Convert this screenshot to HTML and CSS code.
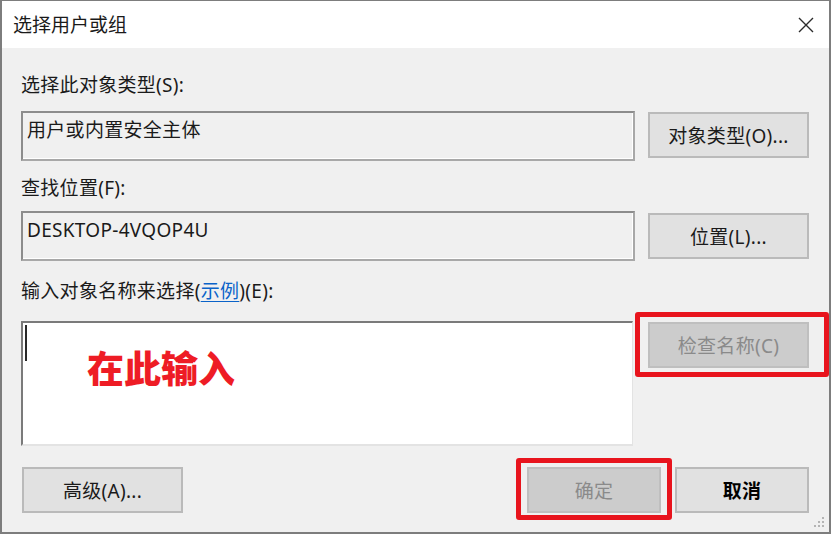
FILE: index.html
```html
<!DOCTYPE html>
<html lang="zh-CN">
<head>
<meta charset="utf-8">
<title>选择用户或组</title>
<link rel="stylesheet" href="styles.css">
</head>
<body>
<div class="window">
  <div class="titlebar">
    <span class="title">选择用户或组</span>
    <svg class="close" width="16" height="16" viewBox="0 0 16 16"><path d="M1 1 L15 15 M15 1 L1 15" stroke="#2b2b2b" stroke-width="1.4" fill="none"/></svg>
  </div>
  <div class="content">
    <div class="label">选择此对象类型(S):</div>
    <div class="row row1">
      <div class="field">用户或内置安全主体</div>
      <div class="btn side">对象类型(O)...</div>
    </div>
    <div class="label label2">查找位置(F):</div>
    <div class="row row2">
      <div class="field">DESKTOP-4VQOP4U</div>
      <div class="btn side">位置(L)...</div>
    </div>
    <div class="label label3">输入对象名称来选择(<span class="link">示例</span>)(E):</div>
    <div class="row row3">
      <div class="area">
        <span class="caret"></span>
        <span class="hint">在此输入</span>
      </div>
      <div class="btn side disabled marked mark1">检查名称(C)</div>
    </div>
    <div class="bottom">
      <div class="btn adv">高级(A)...</div>
      <div class="spacer"></div>
      <div class="btn ok disabled marked mark2">确定</div>
      <div class="btn cancel">取消</div>
    </div>
  </div>
  <svg class="grip" width="14" height="14" viewBox="0 0 14 14">
    <rect x="10" y="2" width="2" height="2" fill="#b4b4b4"/>
    <rect x="6" y="6" width="2" height="2" fill="#b4b4b4"/>
    <rect x="10" y="6" width="2" height="2" fill="#b4b4b4"/>
    <rect x="2" y="10" width="2" height="2" fill="#b4b4b4"/>
    <rect x="6" y="10" width="2" height="2" fill="#b4b4b4"/>
    <rect x="10" y="10" width="2" height="2" fill="#b4b4b4"/>
  </svg>
</div>
</body>
</html>
```
FILE: styles.css
```css
html, body {
  margin: 0;
  padding: 0;
  background: #ffffff;
}
body {
  font-family: "Noto Sans", "Noto Sans CJK SC", sans-serif;
  font-size: 19px;
  letter-spacing: 0.3px;
  color: #1a1a1a;
}
.window {
  position: relative;
  width: 831px;
  height: 534px;
  box-sizing: border-box;
  border: 2px solid #7d7d7d;
  border-top-width: 1px;
  background: #f0f0f0;
  display: flex;
  flex-direction: column;
}
.titlebar {
  height: 47px;
  background: #ffffff;
  display: flex;
  align-items: center;
  padding: 0 15px 0 11px;
  flex: none;
}
.title {
  flex: 1;
  font-size: 19px;
  letter-spacing: 0;
  line-height: 24px;
  color: #1a1a1a;
}
.close {
  display: block;
}
.content {
  padding: 25px 20px 0 19px;
  display: flex;
  flex-direction: column;
}
.label {
  height: 24px;
  line-height: 24px;
}
.label2 { margin-top: 15px; }
.label3 { margin-top: 18px; }
.link {
  color: #0a63c9;
  text-decoration: underline;
  text-underline-offset: 3px;
}
.row {
  display: flex;
  align-items: flex-start;
}
.row1 { margin-top: 14px; }
.row2 { margin-top: 11px; }
.row3 { margin-top: 18px; }
.field {
  width: 614px;
  height: 50px;
  box-sizing: border-box;
  border: 2px solid #8c8c8c;
  border-bottom-color: #a8a8a8;
  border-right-color: #a8a8a8;
  box-shadow: inset -1px -1px 0 #ffffff;
  padding: 4px 0 0 4px;
  line-height: 26px;
  background: #f0f0f0;
}
.btn {
  box-sizing: border-box;
  height: 46px;
  border: 2px solid #bababa;
  background: #e1e1e1;
  display: flex;
  align-items: center;
  justify-content: center;
  color: #1a1a1a;
}
.side {
  width: 161px;
  margin-left: 13px;
  margin-top: 1px;
}
.row2 .side { margin-top: 2px; }
.disabled {
  background: #cccccc;
  border-color: #bfbfbf;
  color: #8a8a8a;
}
.area {
  position: relative;
  width: 612px;
  height: 125px;
  box-sizing: border-box;
  background: #ffffff;
  border: 2px solid #7a7a7a;
  border-right: 1px solid #e3e3e3;
  border-bottom: 2px solid #e3e3e3;
  display: flex;
  align-items: flex-start;
}
.caret {
  width: 2px;
  height: 36px;
  background: #2a2a2a;
  margin: 2px 0 0 2px;
  flex: none;
}
.hint {
  margin: 22px 0 0 60px;
  font-size: 37px;
  line-height: 48px;
  font-weight: 900;
  color: #ee1c25;
  letter-spacing: 0;
}
.row3 .side { margin-left: 15px; }
.marked {
  position: relative;
}
.marked::after {
  content: "";
  position: absolute;
  border: 5px solid #e8141d;
  border-radius: 3px;
}
.mark1::after {
  left: -15px;
  top: -12px;
  right: -22px;
  bottom: -11px;
}
.mark2::after {
  left: -13px;
  top: -11px;
  right: -13px;
  bottom: -9px;
}
.bottom {
  margin-top: 21px;
  display: flex;
  align-items: center;
  padding-left: 1px;
}
.adv { width: 161px; }
.spacer { flex: 1; }
.ok { width: 134px; }
.cancel {
  width: 134px;
  margin-left: 14px;
  font-weight: 700;
  color: #000;
}
.grip {
  position: absolute;
  right: 3px;
  bottom: 3px;
}
```
